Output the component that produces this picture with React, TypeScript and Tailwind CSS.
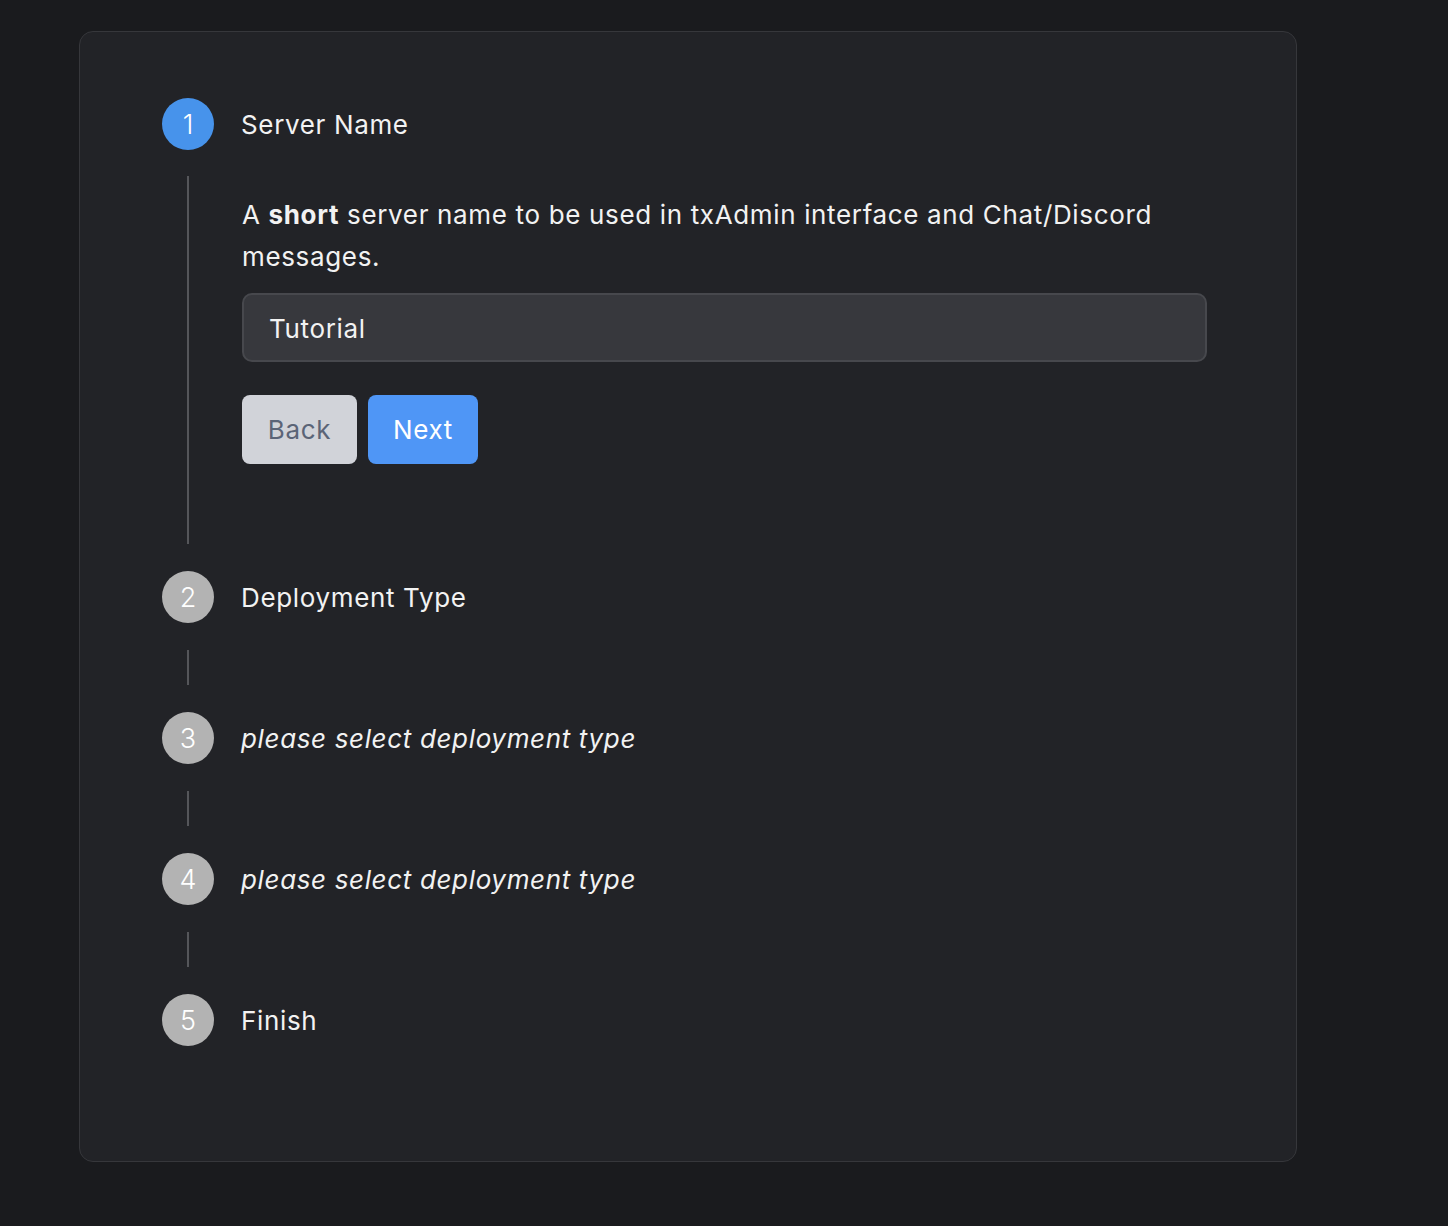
import React from "react";

function Circle({ n, active }: { n: number; active?: boolean }) {
  return (
    <div
      className={
        "flex h-[52px] w-[52px] shrink-0 items-center justify-center rounded-full text-[27px] font-light leading-none text-white " +
        (active ? "bg-[#4793eb]" : "bg-[#b3b3b3]")
      }
    >
      {n}
    </div>
  );
}

function Header({ n, active, label, italic }: { n: number; active?: boolean; label: string; italic?: boolean }) {
  return (
    <div className="flex h-[52px] items-center gap-[27px]">
      <Circle n={n} active={active} />
      <span className={"text-[26px] tracking-[0.025em] text-[#f2f2f2] " + (italic ? "italic" : "")}>{label}</span>
    </div>
  );
}

function Connector() {
  return <div className="ml-[25px] my-[27px] h-[35px] w-[2px] bg-[#55565a]" />;
}

export default function App() {
  return (
    <div
      className="min-h-[1226px] bg-[#1a1b1e] pl-[79px] pt-[31px]"
      style={{ fontFamily: "Inter, 'Noto Sans', sans-serif" }}
    >
      <div className="w-[1218px] h-[1131px] rounded-[14px] border border-[#36373b] bg-[#222327] pl-[82px] pr-[89px] pt-[66px]">
        <Header n={1} active label="Server Name" />
        <div className="ml-[25px] mt-[26px] mb-[27px] border-l-2 border-[#55565a] pl-[53px] pt-[18px] pb-[80px]">
          <p className="text-[26px] leading-[42px] tracking-[0.025em] text-[#f2f2f2]">
            A <span className="font-bold">short</span> server name to be used in txAdmin interface and Chat/Discord messages.
          </p>
          <div className="mt-[15px] flex h-[69px] items-center rounded-[10px] border-2 border-[#47484d] bg-[#37383d] px-[25px] pt-[2px] text-[26px] tracking-[0.025em] text-[#f2f2f2]">
            Tutorial
          </div>
          <div className="mt-[33px] flex gap-[11px]">
            <button className="h-[69px] w-[115px] rounded-[8px] bg-[#d1d3d9] text-[26px] tracking-[0.025em] text-[#5b6477]">Back</button>
            <button className="h-[69px] w-[110px] rounded-[8px] bg-[#4f96f6] text-[26px] tracking-[0.025em] text-white">Next</button>
          </div>
        </div>
        <Header n={2} label="Deployment Type" />
        <Connector />
        <Header n={3} label="please select deployment type" italic />
        <Connector />
        <Header n={4} label="please select deployment type" italic />
        <Connector />
        <Header n={5} label="Finish" />
      </div>
    </div>
  );
}
